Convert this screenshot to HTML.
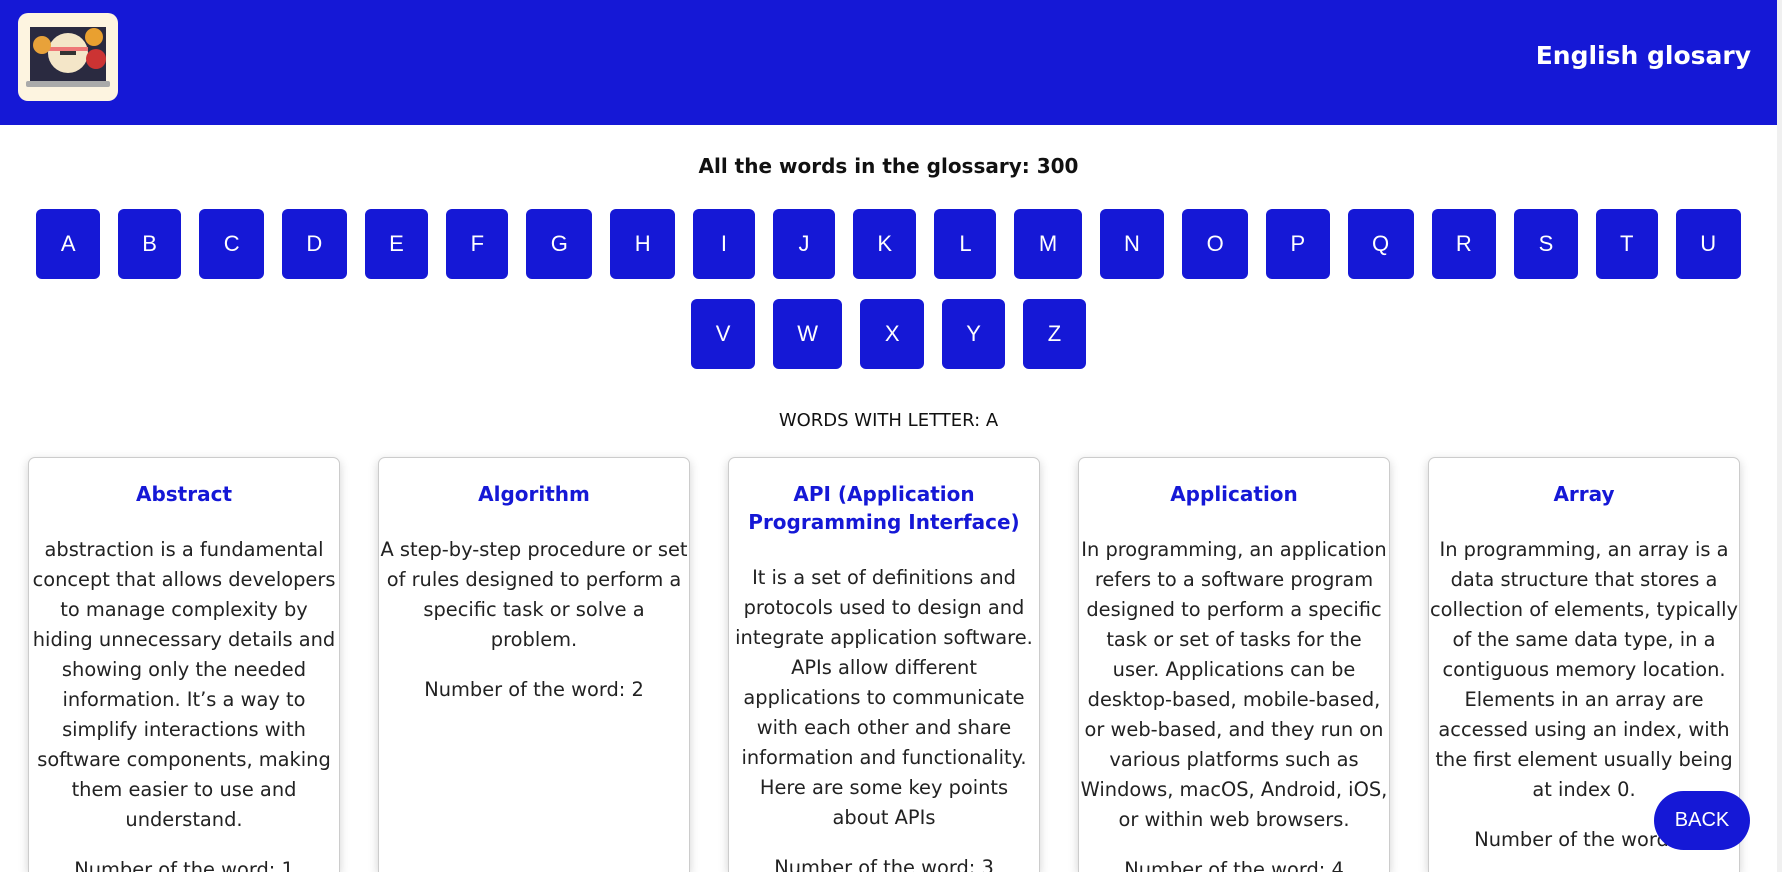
<!DOCTYPE html>
<html><head><meta charset="utf-8"><style>
*{box-sizing:border-box}
html,body{margin:0;width:1782px;height:872px;overflow:hidden}
body{background:#fff;font-family:"DejaVu Sans","Liberation Sans",sans-serif;position:relative}
.hdr{position:absolute;left:0;top:0;width:1777px;height:125px;background:#1518d6}
.logo{position:absolute;left:18px;top:13px;width:100px;height:88px;border-radius:10px;background:#fdf4e0;overflow:hidden}
.ttl{position:absolute;right:26px;top:41px;color:#fff;font:bold 25px "DejaVu Sans",sans-serif}
.sb{position:absolute;right:0;top:0;width:5px;height:872px;background:#f0f0f0}
h2{position:absolute;top:154px;left:0;width:1777px;text-align:center;margin:0;font-size:20px;font-weight:bold;color:#111}
.row{position:absolute;left:0;width:1777px;display:flex;justify-content:center;gap:18px}
.b{height:70px;background:#1518d6;color:#fff;border-radius:6px;display:flex;align-items:center;justify-content:center;font:22px "Liberation Sans",sans-serif;padding:0 24.4px;min-width:62px}
.wl{position:absolute;top:410px;left:0;width:1777px;text-align:center;font-size:18px;color:#111}
.card{position:absolute;top:457px;width:312px;height:415px;overflow:hidden;border:1px solid #ccc;border-bottom:none;border-radius:7px 7px 0 0;box-shadow:0 3px 10px rgba(0,0,0,.18);text-align:center;padding:22px 1px 0;background:#fff}
.card h3{margin:0 0 27px;color:#1518d6;font-size:20px;line-height:28px;font-weight:bold;padding:0 10px}
.card p{margin:0 0 20px;font-size:19.4px;line-height:30px;color:#222}
.back{position:absolute;left:1654px;top:791px;width:96px;height:59px;border-radius:30px;background:#1518d6;color:#fff;font:20px "Liberation Sans",sans-serif;display:flex;align-items:center;justify-content:center}
</style></head><body>
<div class="hdr">
<div class="logo"><svg width="100" height="88" viewBox="0 0 100 88"><rect x="12" y="14" width="76" height="56" fill="#2a2a40"/><rect x="8" y="68" width="84" height="6" rx="2" fill="#aaa"/><circle cx="50" cy="40" r="20" fill="#f4e6c8"/><path d="M30 36h40" stroke="#e77" stroke-width="4"/><circle cx="24" cy="32" r="9" fill="#e8a23a"/><circle cx="78" cy="46" r="10" fill="#c33"/><circle cx="76" cy="24" r="9" fill="#e9a030"/><rect x="42" y="38" width="16" height="4" fill="#333"/></svg></div>
<div class="ttl">English glosary</div>
</div>
<div class="sb"></div>
<h2>All the words in the glossary: 300</h2>
<div class="row" style="top:209px"><div class="b">A</div><div class="b">B</div><div class="b">C</div><div class="b">D</div><div class="b">E</div><div class="b">F</div><div class="b">G</div><div class="b">H</div><div class="b">I</div><div class="b">J</div><div class="b">K</div><div class="b">L</div><div class="b">M</div><div class="b">N</div><div class="b">O</div><div class="b">P</div><div class="b">Q</div><div class="b">R</div><div class="b">S</div><div class="b">T</div><div class="b">U</div></div>
<div class="row" style="top:299px"><div class="b">V</div><div class="b">W</div><div class="b">X</div><div class="b">Y</div><div class="b">Z</div></div>
<div class="wl">WORDS WITH LETTER: A</div>
<div class="card" style="left:28px"><h3>Abstract</h3><p>abstraction is a fundamental concept that allows developers to manage complexity by hiding unnecessary details and showing only the needed information. It’s a way to simplify interactions with software components, making them easier to use and understand.</p><p>Number of the word: 1</p></div>
<div class="card" style="left:378px"><h3>Algorithm</h3><p>A step-by-step procedure or set of rules designed to perform a specific task or solve a problem.</p><p>Number of the word: 2</p></div>
<div class="card" style="left:728px"><h3>API (Application Programming Interface)</h3><p>It is a set of definitions and protocols used to design and integrate application software. APIs allow different applications to communicate with each other and share information and functionality. Here are some key points about APIs</p><p>Number of the word: 3</p></div>
<div class="card" style="left:1078px"><h3>Application</h3><p>In programming, an application refers to a software program designed to perform a specific task or set of tasks for the user. Applications can be desktop-based, mobile-based, or web-based, and they run on various platforms such as Windows, macOS, Android, iOS, or within web browsers.</p><p>Number of the word: 4</p></div>
<div class="card" style="left:1428px"><h3>Array</h3><p>In programming, an array is a data structure that stores a collection of elements, typically of the same data type, in a contiguous memory location. Elements in an array are accessed using an index, with the first element usually being at index 0.</p><p>Number of the word: 5</p></div>
<div class="back">BACK</div>
</body></html>
